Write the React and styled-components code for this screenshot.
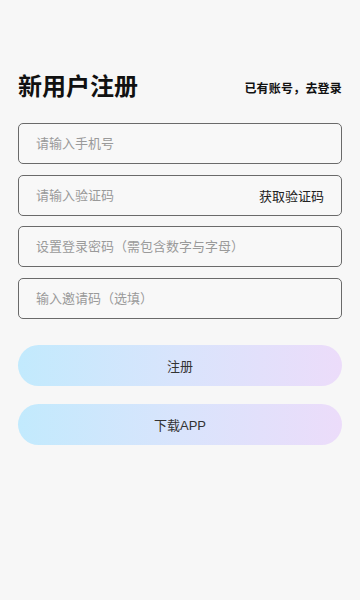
import React from 'react';
import styled, { createGlobalStyle } from 'styled-components';

const GlobalStyle = createGlobalStyle`
  html, body {
    margin: 0;
    padding: 0;
    background: #f7f7f7;
  }
  body {
    font-family: "Liberation Sans", "Noto Sans CJK SC", sans-serif;
  }
`;

const Page = styled.div`
  min-height: 600px;
  box-sizing: border-box;
  padding: 72px 18px 0 18px;
  background: #f7f7f7;
`;

const Header = styled.div`
  display: flex;
  align-items: center;
  justify-content: space-between;
  height: 30px;
  margin-bottom: 21px;
`;

const Title = styled.h1`
  margin: 0;
  font-size: 24px;
  font-weight: 700;
  color: #111;
  line-height: 30px;
`;

const LoginLink = styled.a`
  font-size: 12px;
  font-weight: 700;
  color: #111;
  text-decoration: none;
  letter-spacing: 0.2px;
`;

const Form = styled.div`
  display: flex;
  flex-direction: column;
  gap: 10.5px;
`;

const Field = styled.div`
  display: flex;
  align-items: center;
  height: 41px;
  box-sizing: border-box;
  border: 1px solid #6a6a6a;
  border-radius: 5px;
  padding: 0 17px;
  background: #f8f8f8;
`;

const Input = styled.input`
  flex: 1;
  min-width: 0;
  border: none;
  outline: none;
  background: transparent;
  font-family: inherit;
  font-size: 13px;
  color: #333;
  padding: 0;
  &::placeholder {
    color: #9a9a9a;
  }
`;

const CodeButton = styled.span`
  font-size: 13px;
  color: #222;
  white-space: nowrap;
`;

const Actions = styled.div`
  display: flex;
  flex-direction: column;
  gap: 18px;
  margin-top: 26px;
`;

const PillButton = styled.button`
  height: 41px;
  border: none;
  border-radius: 21px;
  background: linear-gradient(90deg, #c2eafd 0%, #d9e4fc 50%, #ecdcfa 100%);
  font-family: inherit;
  font-size: 13px;
  color: #333;
  cursor: pointer;
`;

const fields = [
  { placeholder: '请输入手机号' },
  { placeholder: '请输入验证码', code: true },
  { placeholder: '设置登录密码（需包含数字与字母）', type: 'password' },
  { placeholder: '输入邀请码（选填）' },
];

export default function App() {
  return (
    <>
      <GlobalStyle />
      <Page>
        <Header>
          <Title>新用户注册</Title>
          <LoginLink href="#">已有账号，去登录</LoginLink>
        </Header>
        <Form>
          {fields.map((f, i) => (
            <Field key={i}>
              <Input type={f.type || 'text'} placeholder={f.placeholder} />
              {f.code && <CodeButton>获取验证码</CodeButton>}
            </Field>
          ))}
        </Form>
        <Actions>
          <PillButton>注册</PillButton>
          <PillButton>下载APP</PillButton>
        </Actions>
      </Page>
    </>
  );
}
